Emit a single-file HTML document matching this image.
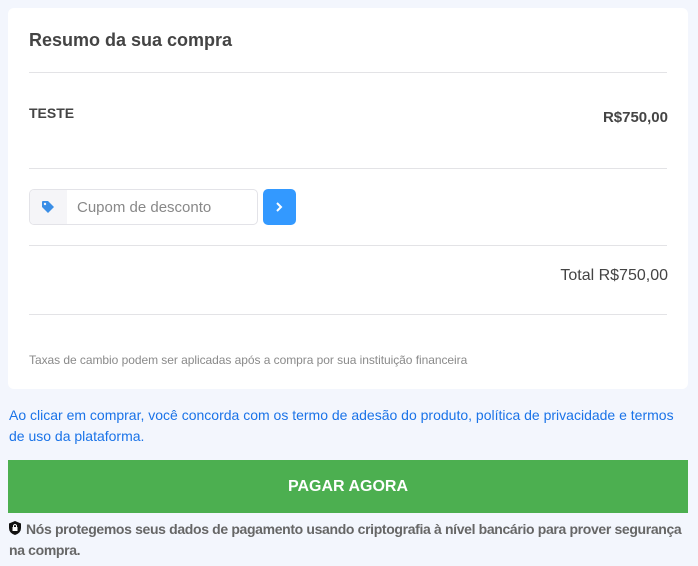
<!DOCTYPE html>
<html><head><style>
*{margin:0;padding:0;box-sizing:border-box}
body{width:698px;height:566px;background:#f3f6fd;font-family:"Liberation Sans",sans-serif;position:relative;overflow:hidden}
.card{position:absolute;left:8px;top:8px;width:680px;height:381px;background:#fff;border-radius:6px}
.a{position:absolute;white-space:nowrap}
.hr{position:absolute;left:29px;width:638px;height:1px;background:#e3e3e6}
</style></head><body>
<div class="card"></div>
<div class="a" style="left:29px;top:30px;font-size:18px;font-weight:bold;color:#444">Resumo da sua compra</div>
<div class="hr" style="top:72px"></div>
<div class="a" style="left:29px;top:105px;font-size:14px;font-weight:bold;color:#444">TESTE</div>
<div class="a" style="right:30px;top:109px;font-size:15px;font-weight:bold;color:#444">R$750,00</div>
<div class="hr" style="top:168px"></div>
<div class="a" style="left:29px;top:189px;width:229px;height:36px;border:1px solid #e3e3e8;border-radius:5px;overflow:hidden">
 <div style="position:absolute;left:0;top:0;width:37px;height:34px;background:#f5f5f8"></div>
 <svg style="position:absolute;left:11px;top:10px" width="14" height="14" viewBox="0 0 14 14"><path d="M1 2 Q1 1 2 1 H7 L13 7 L7 13 L1 7 Z" fill="#3a8ee6"/><circle cx="4" cy="4" r="1.2" fill="#f5f5f8"/></svg>
 <div style="position:absolute;left:47px;top:9px;font-size:15px;color:#888">Cupom de desconto</div>
</div>
<div class="a" style="left:263px;top:189px;width:33px;height:36px;background:#3399ff;border-radius:5px">
 <svg style="position:absolute;left:11px;top:12px" width="10" height="12" viewBox="0 0 10 12"><path d="M3 2 L7 6 L3 10" stroke="#fff" stroke-width="2" fill="none"/></svg>
</div>
<div class="hr" style="top:245px"></div>
<div class="a" style="right:30px;top:267px;font-size:16px;color:#444">Total R$750,00</div>
<div class="hr" style="top:314px"></div>
<div class="a" style="left:29px;top:353px;font-size:12px;color:#8a8a8a;letter-spacing:-0.05px">Taxas de cambio podem ser aplicadas após a compra por sua instituição financeira</div>
<div class="a" style="left:9px;top:405px;font-size:14px;line-height:21px;color:#1a73e8;white-space:normal;width:680px">Ao clicar em comprar, você concorda com os termo de adesão do produto, política de privacidade e termos de uso da plataforma.</div>
<div class="a" style="left:8px;top:460px;width:680px;height:53px;background:#4caf50;color:#fff;font-weight:bold;font-size:16px;text-align:center;line-height:53px">PAGAR AGORA</div>
<svg style="position:absolute;left:9px;top:521px" width="12" height="14" viewBox="0 0 12 14"><path d="M6 0 L12 2.5 V7 Q12 12 6 14 Q0 12 0 7 V2.5 Z" fill="#111"/><rect x="3.5" y="6" width="5" height="4" fill="#fff"/><path d="M4.5 6 V4.5 Q6 2.5 7.5 4.5 V6" stroke="#fff" fill="none"/></svg>
<div class="a" style="left:9px;top:519px;font-size:14px;line-height:21px;font-weight:bold;color:#666;white-space:normal;width:685px;text-indent:17px;letter-spacing:-0.35px">Nós protegemos seus dados de pagamento usando criptografia à nível bancário para prover segurança<br>na compra.</div>
</body></html>
